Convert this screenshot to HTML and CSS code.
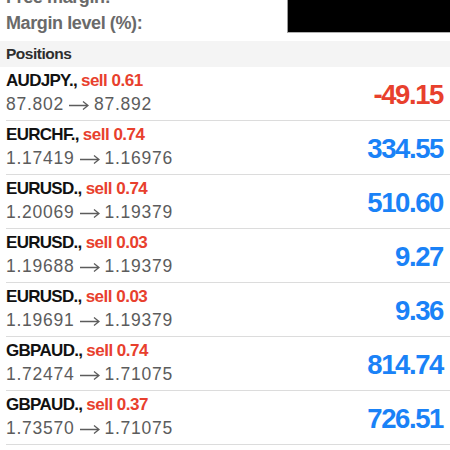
FILE: index.html
```html
<!DOCTYPE html>
<html>
<head>
<meta charset="utf-8">
<link rel="stylesheet" href="styles.css">
</head>
<body>
<div class="summary">
  <div class="sum-line">Free margin:</div>
  <div class="sum-line">Margin level (%):</div>
  <div class="redact"></div>
</div>
<div class="section">Positions</div>
<div class="list">
  <div class="row">
    <div class="info">
      <div class="name">AUDJPY., <span class="side">sell 0.61</span></div>
      <div class="price">87.802<svg class="arrow" viewBox="0 0 20 10" width="20" height="10"><path d="M0 5.5H19M14 1.5L19 5.5L14 9.5"/></svg>87.892</div>
    </div>
    <div class="pl loss">-49.15</div>
  </div>
  <div class="row">
    <div class="info">
      <div class="name">EURCHF., <span class="side">sell 0.74</span></div>
      <div class="price">1.17419<svg class="arrow" viewBox="0 0 20 10" width="20" height="10"><path d="M0 5.5H19M14 1.5L19 5.5L14 9.5"/></svg>1.16976</div>
    </div>
    <div class="pl gain">334.55</div>
  </div>
  <div class="row">
    <div class="info">
      <div class="name">EURUSD., <span class="side">sell 0.74</span></div>
      <div class="price">1.20069<svg class="arrow" viewBox="0 0 20 10" width="20" height="10"><path d="M0 5.5H19M14 1.5L19 5.5L14 9.5"/></svg>1.19379</div>
    </div>
    <div class="pl gain">510.60</div>
  </div>
  <div class="row">
    <div class="info">
      <div class="name">EURUSD., <span class="side">sell 0.03</span></div>
      <div class="price">1.19688<svg class="arrow" viewBox="0 0 20 10" width="20" height="10"><path d="M0 5.5H19M14 1.5L19 5.5L14 9.5"/></svg>1.19379</div>
    </div>
    <div class="pl gain">9.27</div>
  </div>
  <div class="row">
    <div class="info">
      <div class="name">EURUSD., <span class="side">sell 0.03</span></div>
      <div class="price">1.19691<svg class="arrow" viewBox="0 0 20 10" width="20" height="10"><path d="M0 5.5H19M14 1.5L19 5.5L14 9.5"/></svg>1.19379</div>
    </div>
    <div class="pl gain">9.36</div>
  </div>
  <div class="row">
    <div class="info">
      <div class="name">GBPAUD., <span class="side">sell 0.74</span></div>
      <div class="price">1.72474<svg class="arrow" viewBox="0 0 20 10" width="20" height="10"><path d="M0 5.5H19M14 1.5L19 5.5L14 9.5"/></svg>1.71075</div>
    </div>
    <div class="pl gain">814.74</div>
  </div>
  <div class="row">
    <div class="info">
      <div class="name">GBPAUD., <span class="side">sell 0.37</span></div>
      <div class="price">1.73570<svg class="arrow" viewBox="0 0 20 10" width="20" height="10"><path d="M0 5.5H19M14 1.5L19 5.5L14 9.5"/></svg>1.71075</div>
    </div>
    <div class="pl gain">726.51</div>
  </div>
</div>
</body>
</html>
```
FILE: styles.css
```css
html, body {
  margin: 0;
  padding: 0;
  background: #ffffff;
  font-family: "Liberation Sans", Arial, sans-serif;
}
body {
  width: 450px;
  height: 450px;
  overflow: hidden;
}
.summary {
  position: relative;
  height: 41px;
  overflow: hidden;
  display: flex;
  flex-direction: column;
  justify-content: flex-end;
  padding: 0 0 5px 6px;
  box-sizing: border-box;
}
.sum-line {
  font-size: 18px;
  line-height: 26px;
  font-weight: bold;
  color: #6a6a6a;
  letter-spacing: -0.4px;
  flex-shrink: 0;
}
.redact {
  position: absolute;
  top: 0;
  right: 0;
  width: 162px;
  height: 32px;
  background: #000;
  border-left: 1px solid #9a9a9a;
  border-bottom: 1px solid #b0b0b0;
}
.section {
  height: 26px;
  background: #f4f4f4;
  padding-left: 6px;
  font-size: 15.5px;
  line-height: 26px;
  font-weight: bold;
  color: #2e2e2e;
  letter-spacing: -0.5px;
}
.list {
  padding-left: 6px;
}
.row {
  height: 53px;
  border-bottom: 1px solid #dcdcdc;
  display: flex;
  align-items: center;
  justify-content: space-between;
  padding-right: 7px;
}
.info {
  display: flex;
  flex-direction: column;
  padding-top: 1px;
}
.name {
  font-size: 17px;
  line-height: 20px;
  font-weight: bold;
  color: #111;
  letter-spacing: -0.7px;
}
.side {
  color: #e8402d;
  letter-spacing: -0.5px;
}
.price {
  font-size: 17.5px;
  line-height: 26px;
  color: #5c5c5c;
  letter-spacing: 0.75px;
  display: flex;
  align-items: center;
}
.arrow {
  margin: 1px 5px 0 5px;
  fill: none;
  stroke: #5c5c5c;
  stroke-width: 1.3;
  flex-shrink: 0;
}
.pl {
  font-size: 27.5px;
  font-weight: bold;
  letter-spacing: -1.4px;
  padding-top: 2px;
}
.loss { color: #e8402d; }
.gain { color: #1a82f7; }
```
